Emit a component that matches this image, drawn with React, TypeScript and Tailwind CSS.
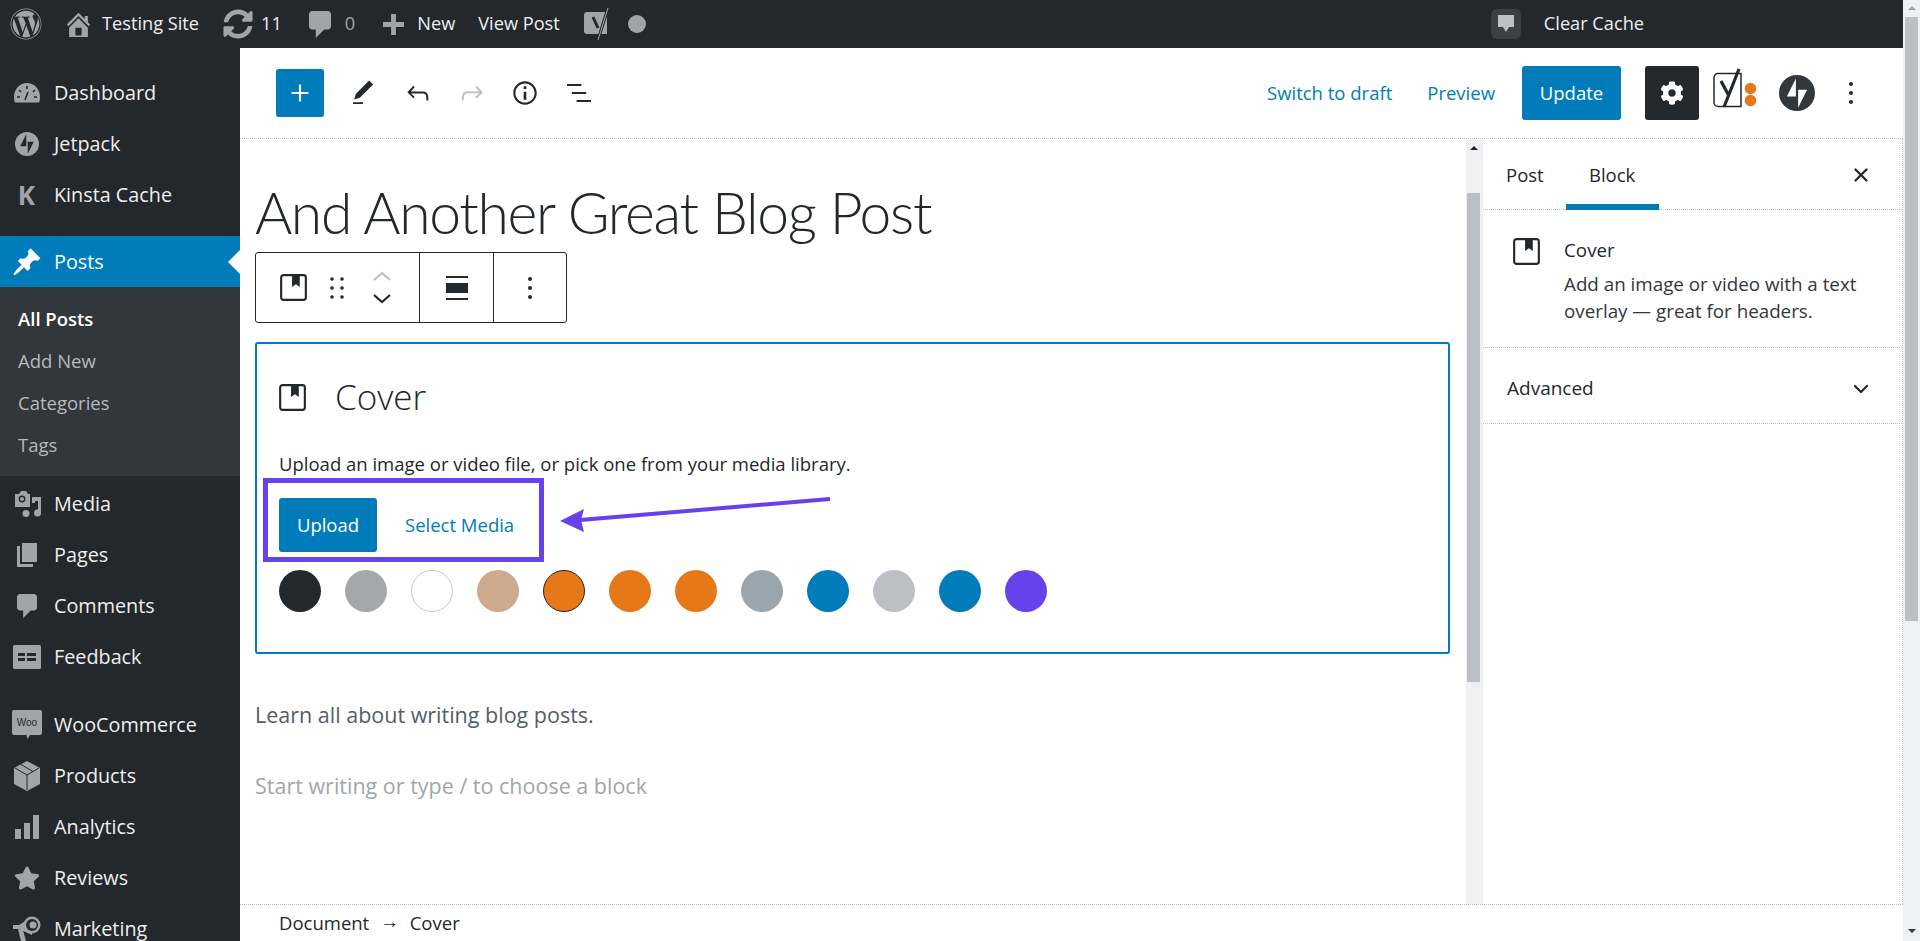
import { ReactNode } from "react";
import { FaWordpress, FaCog, FaSyncAlt, FaStar } from "react-icons/fa";
import { ChevronDown, Plus, X } from "lucide-react";

const iconGray = "#a0a5aa";

// Jetpack style bolt-in-circle, used in both sidebar and header
function JetpackMark({ size, fill, bolt }: { size: number; fill: string; bolt: string }) {
  return (
    <svg width={size} height={size} viewBox="0 0 32 32">
      <circle cx="16" cy="16" r="16" fill={fill} />
      <path d="M15 19V3L7 19z M17 13v16l8-16z" fill={bolt} />
    </svg>
  );
}

function CoverIcon({ size = 28 }: { size?: number }) {
  return (
    <svg width={size} height={size} viewBox="0 0 28 28" fill="none">
      <rect x="1.2" y="1.2" width="25.6" height="25.6" rx="2.5" stroke="#23282d" strokeWidth="2.2" />
      <path d="M12.5 1.5h8v12l-4-3-4 3z" fill="#23282d" />
    </svg>
  );
}

function GaugeIcon() {
  return (
    <svg width="26" height="20" viewBox="0 0 26 20">
      <path d="M13 0C6 0 0 6 0 14c0 2 .3 4 1 5.500h24c.7-1.500 1-3.500 1-5.500C26 6 20 0 13 0z" fill={iconGray} />
      <path d="M13 3v3M5 7l2 2M21 7l-2 2M3 14h3M20 14h3M11 17l3-8" stroke="#23282d" strokeWidth="1.6" />
    </svg>
  );
}

function BubbleIcon({ width, height }: { width: number; height: number }) {
  return (
    <svg width={width} height={height} viewBox="3 2 13 16" fill={iconGray} preserveAspectRatio="none">
      <path d="M5 2h9c1.100 0 2 .9 2 2v7c0 1.100-.9 2-2 2h-2l-5 5v-5H5c-1.100 0-2-.9-2-2V4c0-1.100.9-2 2-2z" />
    </svg>
  );
}

function HomeIcon() {
  return (
    <svg width="25" height="25" viewBox="2 2 16 16" fill={iconGray}>
      <path d="M16 8.500l1.530 1.530-1.060 1.060L10 4.620l-6.470 6.470-1.060-1.060L10 2.500l4 4v-2h2v4zm-6-2.460l6 5.990V18H4v-5.970zM12 17v-5H8v5h4z" />
    </svg>
  );
}

function PinIcon() {
  return (
    <svg width="28" height="28" viewBox="1 1 18 18" fill="#ffffff">
      <path d="M10.440 3.020l1.820-1.820 6.360 6.350-1.830 1.820c-1.050-.68-2.480-.57-3.410.36l-.75.75c-.92.93-1.040 2.360-.35 3.410l-1.830 1.820-2.410-2.410-2.800 2.790c-.42.42-3.380 2.710-3.800 2.290s1.860-3.390 2.280-3.810l2.790-2.790L4.100 9.360l1.830-1.820c1.050.69 2.480.57 3.400-.36l.75-.75c.93-.92 1.050-2.350.36-3.410z" />
    </svg>
  );
}

function MegaphoneIcon() {
  return (
    <svg width="28" height="28" viewBox="0 0 28 28">
      <path d="M0 10h6L19 2v18L6 14H0z" fill={iconGray} />
      <path d="M5 14l3 12h5l-3-11z" fill={iconGray} />
      <circle cx="19" cy="10" r="8.500" fill={iconGray} />
      <circle cx="19" cy="10" r="6" fill="#23282d" />
      <circle cx="20" cy="10" r="3.500" fill={iconGray} />
    </svg>
  );
}

function MediaIcon() {
  return (
    <svg width="28" height="28" viewBox="0 0 28 28" fill={iconGray}>
      <path d="M2 4h4l2-3h5l2 3h2v13H2z" />
      <circle cx="9" cy="9" r="3.400" fill="#23282d" />
      <circle cx="9" cy="9" r="2" fill={iconGray} />
      <path d="M19 7h9v16a3.500 3.500 0 1 1-3-3.400V11h-3v2h-3z" />
      <circle cx="13" cy="23.500" r="3.500" />
    </svg>
  );
}

function PagesIcon() {
  return (
    <svg width="20" height="24" viewBox="0 0 20 24" fill={iconGray}>
      <path d="M5 0h15v19H5z" />
      <path d="M0 3h3v18h13v3H0z" />
    </svg>
  );
}

function FeedbackIcon() {
  return (
    <svg width="28" height="24" viewBox="0 0 28 24">
      <rect width="28" height="24" rx="1.500" fill={iconGray} />
      <path d="M5 8h7v3H5zM5 13h7v3H5zM14 8h9v3h-9zM14 13h9v3h-9z" fill="#23282d" />
    </svg>
  );
}

function WooIcon() {
  return (
    <svg width="30" height="30" viewBox="0 0 30 30">
      <path d="M2 0h26a2 2 0 0 1 2 2v21a2 2 0 0 1-2 2H18l-2.500 4-1-4H2a2 2 0 0 1-2-2V2a2 2 0 0 1 2-2z" fill={iconGray} />
      <text x="15" y="16" textAnchor="middle" fontSize="10" fontFamily="'Liberation Sans', sans-serif" fill="#23282d">Woo</text>
    </svg>
  );
}

function BoxIcon() {
  return (
    <svg width="26" height="30" viewBox="0 0 26 30">
      <path d="M13 0l13 7v16l-13 7-13-7V7z" fill={iconGray} />
      <path d="M1 7l12 7 12-7M13 14v15M7 3.500l12 7" stroke="#23282d" strokeWidth="1" fill="none" />
    </svg>
  );
}

function BarsIcon() {
  return (
    <svg width="24" height="24" viewBox="0 0 24 24" fill={iconGray}>
      <path d="M0 14h6v10H0zM9 8h6v16H9zM18 0h6v24h-6z" />
    </svg>
  );
}

function Kebab() {
  return (
    <svg width="6" height="22" viewBox="0 0 6 22" fill="#23282d">
      <circle cx="3" cy="2" r="2" /><circle cx="3" cy="11" r="2" /><circle cx="3" cy="20" r="2" />
    </svg>
  );
}

type MenuItem = { label: string; icon: ReactNode };

const topMenu: MenuItem[] = [
  { label: "Dashboard", icon: <GaugeIcon /> },
  { label: "Jetpack", icon: <JetpackMark size={24} fill={iconGray} bolt="#23282d" /> },
  { label: "Kinsta Cache", icon: <span className="text-[26px] font-bold leading-none text-[#a0a5aa]">K</span> },
];

const midMenu: MenuItem[] = [
  { label: "Media", icon: <MediaIcon /> },
  { label: "Pages", icon: <PagesIcon /> },
  { label: "Comments", icon: <BubbleIcon width={20} height={24} /> },
  { label: "Feedback", icon: <FeedbackIcon /> },
];

const lowMenu: MenuItem[] = [
  { label: "WooCommerce", icon: <WooIcon /> },
  { label: "Products", icon: <BoxIcon /> },
  { label: "Analytics", icon: <BarsIcon /> },
  { label: "Reviews", icon: <FaStar size={26} color={iconGray} /> },
  { label: "Marketing", icon: <MegaphoneIcon /> },
];

const swatches = [
  "bg-[#23282d]",
  "bg-[#a5a8ab]",
  "bg-white border border-[#c4c7ca]",
  "bg-[#cda98e]",
  "bg-[#e67819] border border-[#23282d]",
  "bg-[#e67819]",
  "bg-[#e67819]",
  "bg-[#9aa6ae]",
  "bg-[#007cba]",
  "bg-[#bcc0c4]",
  "bg-[#007cba]",
  "bg-[#6741ea]",
];

function SideRow({ item }: { item: MenuItem }) {
  return (
    <div className="flex h-[51px] items-center text-[19.800px] text-[#eeeeee]">
      <div className="flex w-[54px] shrink-0 justify-center pr-[1px]">{item.icon}</div>
      <span>{item.label}</span>
    </div>
  );
}

function Sidebar() {
  return (
    <div className="h-full w-[240px] shrink-0 overflow-hidden bg-[#23282d] pt-[19px]">
      {topMenu.map((m) => <SideRow key={m.label} item={m} />)}
      <div className="mt-[16px] flex h-[51px] items-center justify-between bg-[#007cba] text-[19.800px] text-white">
        <div className="flex items-center">
          <div className="flex w-[54px] justify-center pr-[1px]"><PinIcon /></div>
          <span>Posts</span>
        </div>
        <div className="h-0 w-0 border-y-[12px] border-r-[12px] border-y-transparent border-r-white" />
      </div>
      <div className="flex h-[189px] flex-col justify-center gap-[12px] bg-[#32373c] pl-[18px] text-[18.500px] leading-[30px] text-[#b4b9be]">
        <div className="font-semibold text-white">All Posts</div>
        <div>Add New</div>
        <div>Categories</div>
        <div>Tags</div>
      </div>
      <div className="pt-[2px]">
        {midMenu.map((m) => <SideRow key={m.label} item={m} />)}
      </div>
      <div className="pt-[17px]">
        {lowMenu.map((m) => <SideRow key={m.label} item={m} />)}
      </div>
    </div>
  );
}

function AdminBar() {
  return (
    <div className="flex h-12 shrink-0 items-center bg-[#23282d] text-[18.200px] text-[#eeeeee]">
      <FaWordpress size={32} color={iconGray} className="ml-[10px]" />
      <div className="ml-[24px]"><HomeIcon /></div>
      <span className="ml-[11px]">Testing Site</span>
      <FaSyncAlt size={30} color={iconGray} className="ml-[24px]" />
      <span className="ml-[8px]">11</span>
      <div className="ml-[27px]"><BubbleIcon width={22} height={27} /></div>
      <span className="ml-[14px] text-[#a0a5aa]">0</span>
      <svg width="21" height="21" viewBox="4 2 13 13" fill={iconGray} className="ml-[28px]">
        <path d="M17 7v3h-5v5H9v-5H4V7h5V2h3v5h5z" />
      </svg>
      <span className="ml-[13px]">New</span>
      <span className="ml-[23px]">View Post</span>
      <svg width="28" height="34" viewBox="0 0 28 34" className="ml-[24px]">
        <path d="M3 5h20v22H3a3 3 0 0 1-3-3V8a3 3 0 0 1 3-3z" fill={iconGray} />
        <path d="M9 10l5 11M24 1l-10 32" stroke="#23282d" strokeWidth="3" fill="none" />
        <path d="M24 1l-10 32" stroke={iconGray} strokeWidth="1" fill="none" />
      </svg>
      <span className="ml-[16px] h-[18px] w-[18px] rounded-full bg-[#a0a5aa]" />
      <div className="ml-auto mr-[259px] flex items-center">
        <div className="flex h-[30px] w-[30px] items-center justify-center rounded-[6px] bg-[#3a4045]">
          <svg width="16" height="18" viewBox="0 0 16 18" fill="#bcc0c4"><path d="M0 0h16v12h-5l-3 5-3-5H0z" /></svg>
        </div>
        <span className="ml-[23px]">Clear Cache</span>
      </div>
    </div>
  );
}

function EditorHeader() {
  return (
    <div className="flex h-[91px] shrink-0 items-center border-b border-dotted border-[#bcc0c4] bg-white pl-[36px] pr-[49px]">
      <button className="flex h-12 w-12 items-center justify-center rounded-[3px] bg-[#007cba] text-white">
        <Plus size={26} strokeWidth={2} />
      </button>
      <svg width="30" height="32" viewBox="0 0 24 24" fill="#23282d" className="ml-[24px]">
        <path d="M20.100 5.100L16.900 2 6.200 12.700l-1.300 4.400 4.500-1.300L20.100 5.100zM4 20.800h8v-1.500H4v1.500z" />
      </svg>
      <svg width="32" height="32" viewBox="0 0 24 24" fill="#23282d" className="ml-[24px]">
        <path d="M18.300 11.700c-.6-.6-1.400-.9-2.300-.9H6.700l2.900-3.300-1.100-1-4.500 5L8.500 16l1-1-2.700-2.700H16c.5 0 .9.2 1.300.5 1 1 1 3.400 1 4.500v.3h1.500v-.2c0-1.500 0-4.300-1.500-5.700z" />
      </svg>
      <svg width="32" height="32" viewBox="0 0 24 24" fill="#bcc0c4" className="ml-[22px]">
        <path d="M15.600 6.500l-1.100 1 2.900 3.300H8c-.9 0-1.700.3-2.300.9-1.400 1.500-1.400 4.200-1.400 5.600v.2h1.500v-.3c0-1.100 0-3.500 1-4.500.3-.3.7-.5 1.300-.5h9.200L14.500 15l1.100 1.100 4.600-4.600-4.600-5z" />
      </svg>
      <svg width="32" height="32" viewBox="0 0 24 24" fill="#23282d" className="ml-[21px]">
        <path d="M12 3.200c-4.800 0-8.800 3.900-8.800 8.800 0 4.800 3.900 8.800 8.800 8.800 4.800 0 8.800-3.900 8.800-8.800 0-4.800-4-8.800-8.800-8.800zm0 16c-4 0-7.200-3.300-7.200-7.200C4.800 8 8 4.800 12 4.800s7.200 3.300 7.200 7.200c0 4-3.200 7.200-7.200 7.200zM11 17h2v-6h-2v6zm0-8h2V7h-2v2z" />
      </svg>
      <svg width="32" height="32" viewBox="0 0 24 24" fill="#23282d" className="ml-[22px]">
        <path d="M13.800 5.200H3v1.500h10.800V5.200zm-3.600 12v1.500H21v-1.500H10.200zm7.200-6H6.600v1.500h10.800v-1.500z" />
      </svg>
      <div className="ml-auto flex items-center text-[18.500px] text-[#007cba]">
        <span>Switch to draft</span>
        <span className="ml-[35px]">Preview</span>
        <button className="ml-[27px] h-[54px] w-[99px] rounded-[3px] bg-[#007cba] text-white">Update</button>
        <button className="ml-[24px] flex h-[54px] w-[54px] items-center justify-center rounded-[3px] bg-[#23282d] text-white">
          <FaCog size={24} />
        </button>
        <svg width="44" height="40" viewBox="0 0 44 40" className="mb-[11px] ml-[14px]">
          <path d="M5 5.500h23v33H5a4 4 0 0 1-4-4V9.500a4 4 0 0 1 4-4z" fill="none" stroke="#23282d" strokeWidth="1.500" />
          <path d="M8 13l8 15M26 1L11 39" stroke="#23282d" strokeWidth="3.200" fill="none" />
          <circle cx="37.500" cy="20.500" r="5.800" fill="#e67819" />
          <circle cx="37.500" cy="32.500" r="5.800" fill="#e67819" />
        </svg>
        <div className="ml-[22px]"><JetpackMark size={36} fill="#32373c" bolt="#ffffff" /></div>
        <div className="ml-[33px] flex"><Kebab /></div>
      </div>
    </div>
  );
}

function BlockToolbar() {
  return (
    <div className="flex h-[71px] w-[312px] items-center rounded-[3px] border border-[#23282d]">
      <div className="flex h-full w-[164px] items-center border-r border-[#23282d] pl-[24px]">
        <CoverIcon size={27} />
        <svg width="16" height="24" viewBox="0 0 16 24" fill="#23282d" className="ml-[22px]">
          <circle cx="3" cy="3" r="1.800" /><circle cx="13" cy="3" r="1.800" />
          <circle cx="3" cy="12" r="1.800" /><circle cx="13" cy="12" r="1.800" />
          <circle cx="3" cy="21" r="1.800" /><circle cx="13" cy="21" r="1.800" />
        </svg>
        <div className="ml-[28px] flex flex-col gap-[13px]">
          <svg width="18" height="10" viewBox="0 0 18 10" fill="none" stroke="#bcc0c4" strokeWidth="2.200"><path d="M1 9l8-7 8 7" /></svg>
          <svg width="18" height="10" viewBox="0 0 18 10" fill="none" stroke="#23282d" strokeWidth="2.200"><path d="M1 1l8 7 8-7" /></svg>
        </div>
      </div>
      <div className="flex h-full w-[74px] items-center justify-center border-r border-[#23282d]">
        <svg width="22" height="24" viewBox="0 0 22 24" fill="#23282d">
          <path d="M0 0h22v2H0zM0 7h22v10H0zM0 22h22v2H0z" />
        </svg>
      </div>
      <div className="flex h-full flex-1 items-center justify-center">
        <Kebab />
      </div>
    </div>
  );
}

function CoverBlock() {
  return (
    <div className="relative mt-[19px] h-[312px] w-[1195px] rounded-[3px] border-2 border-[#007cba] pl-[22px] pt-[33px] text-[#23282d]">
      <div className="flex h-[40px] items-center">
        <CoverIcon size={27} />
        <span className="ml-[29px] text-[35px] font-light">Cover</span>
      </div>
      <div className="mt-[33px] text-[18.500px] leading-[27px]">Upload an image or video file, or pick one from your media library.</div>
      <div className="-ml-4 mt-[1px] flex h-[84px] w-[281px] items-start border-[5px] border-[#6741ea] pl-[11px] pt-[15px]">
        <button className="h-[54px] w-[98px] rounded-[3px] bg-[#007cba] text-[18.500px] text-white">Upload</button>
        <span className="ml-[28px] text-[18.500px] leading-[54px] text-[#007cba]">Select Media</span>
      </div>
      <div className="mt-2 flex gap-6">
        {swatches.map((c, i) => (
          <div key={i} className={`h-[42px] w-[42px] rounded-full ${c}`} />
        ))}
      </div>
      {/* annotation arrow pointing at the buttons */}
      <svg width="280" height="40" viewBox="0 0 280 40" className="absolute left-[301px] top-[152px]">
        <path d="M272 3L22 24" stroke="#6741ea" strokeWidth="4" />
        <path d="M2 25l24-12-3 11 3 12z" fill="#6741ea" />
      </svg>
    </div>
  );
}

function Canvas() {
  return (
    <div className="w-[1226px] shrink-0 overflow-hidden pl-[15px]">
      <h1 className="pt-[33px] font-['Lato',sans-serif] text-[57px] font-light leading-[80px] tracking-[-1.3px] text-[#23282d]">And Another Great Blog Post</h1>
      <BlockToolbar />
      <CoverBlock />
      <p className="mt-[45px] text-[21.500px] leading-[32px] text-[#555d66]">Learn all about writing blog posts.</p>
      <p className="mt-[39px] text-[21.500px] leading-[32px] text-[#a2a6aa]">Start writing or type / to choose a block</p>
    </div>
  );
}

function InnerScrollbar() {
  return (
    <div className="flex w-[17px] shrink-0 flex-col items-center bg-[#eff0f1] pl-[1px] pr-[3px]">
      <div className="mt-[7px] h-0 w-0 border-x-[4px] border-b-[4px] border-x-transparent border-b-[#23282d]" />
      <div className="mt-[43px] h-[489px] w-full bg-[#bcc0c4]" />
    </div>
  );
}

function SettingsSidebar() {
  return (
    <div className="flex-1 border-r border-dotted border-[#bcc0c4] text-[#23282d]">
      <div className="flex h-[71px] items-center border-b border-dotted border-[#bcc0c4] pt-[2px] text-[18.500px]">
        <span className="ml-[23px]">Post</span>
        <div className="relative ml-[22px] flex h-full w-[93px] items-center justify-center">
          Block
          <div className="absolute inset-x-0 bottom-[-1px] h-[6px] bg-[#007cba]" />
        </div>
        <X size={22} strokeWidth={2.500} className="ml-auto mr-[30px]" />
      </div>
      <div className="flex h-[138px] border-b border-dotted border-[#bcc0c4] pl-[30px] pt-[28px]">
        <CoverIcon size={27} />
        <div className="ml-[24px] text-[18.800px] leading-[27px]">
          <div className="font-medium leading-[24px]">Cover</div>
          <div className="mt-[9px] w-[310px] text-[#32373c]">Add an image or video with a text overlay — great for headers.</div>
        </div>
      </div>
      <div className="flex h-[76px] items-center justify-between border-b border-dotted border-[#bcc0c4] pl-[24px] pr-[29px] pt-[6px] text-[19px] font-medium">
        <span>Advanced</span>
        <ChevronDown size={24} strokeWidth={2.200} />
      </div>
    </div>
  );
}

export default function App() {
  return (
    <div className="flex h-[941px] w-[1920px] overflow-hidden bg-white font-['Open_Sans',sans-serif]">
      <div className="flex h-full w-[1903px] shrink-0 flex-col">
        <AdminBar />
        <div className="flex min-h-0 flex-1">
          <Sidebar />
          <div className="flex min-w-0 flex-1 flex-col">
            <EditorHeader />
            <div className="flex min-h-0 flex-1">
              <Canvas />
              <InnerScrollbar />
              <SettingsSidebar />
            </div>
            <div className="flex h-[37px] shrink-0 items-center border-t border-dotted border-[#bcc0c4] pl-[39px] text-[18.500px] text-[#23282d]">
              Document <span className="mx-[11px] -translate-y-[2px]">→</span> Cover
            </div>
          </div>
        </div>
      </div>
      <div className="flex h-full w-[17px] shrink-0 flex-col items-center bg-[#eff0f1] pl-[2px] pr-[2px]">
        <div className="mt-[6px] h-0 w-0 border-x-[4px] border-b-[4px] border-x-transparent border-b-[#a0a5aa]" />
        <div className="mt-[7px] h-[604px] w-full bg-[#bcc0c4]" />
        <div className="mt-auto mb-[8px] h-0 w-0 border-x-[4px] border-t-[4px] border-x-transparent border-t-[#32373c]" />
      </div>
    </div>
  );
}
